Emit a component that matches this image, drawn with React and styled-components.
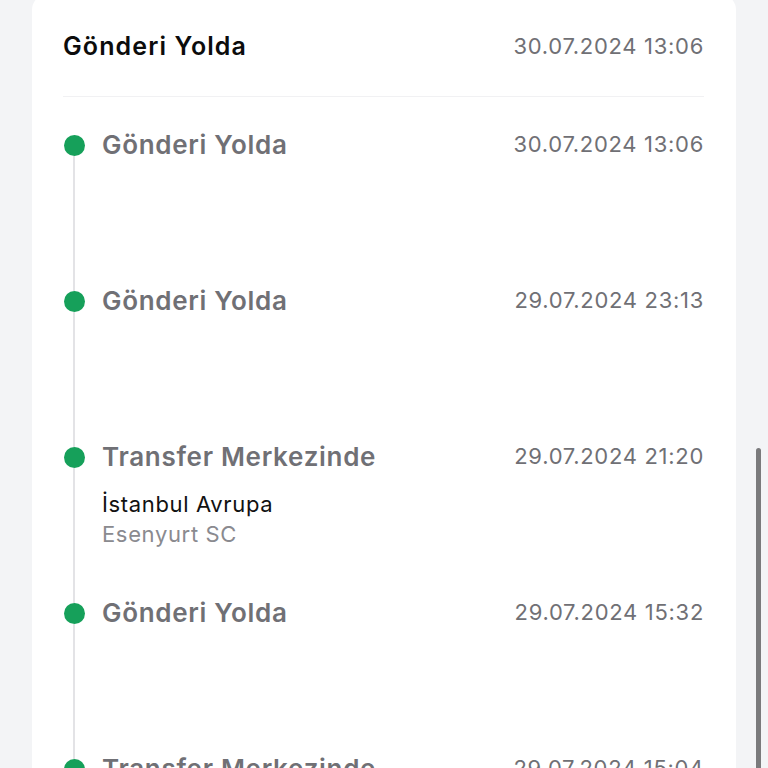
import React from 'react';
import styled, { createGlobalStyle } from 'styled-components';

const GlobalStyle = createGlobalStyle`
  html, body {
    margin: 0;
    padding: 0;
    background: #f3f4f6;
    font-family: Inter, "Liberation Sans", sans-serif;
    overflow: hidden;
  }
`;

const Page = styled.div`
  height: 768px;
  padding: 0 32px;
  overflow: hidden;
`;

const Card = styled.div`
  margin-top: -6px;
  background: #fff;
  border-radius: 16px 16px 0 0;
  padding: 37px 32px 0 31px;
  min-height: 900px;
`;

const Header = styled.div`
  display: flex;
  justify-content: space-between;
  align-items: center;
  height: 30px;
  padding-bottom: 35px;
  border-bottom: 1.5px solid #f1f1f3;
`;

const HeaderTitle = styled.div`
  font-size: 25px;
  font-weight: 600;
  color: #0c0c0c;
  letter-spacing: 1.1px;
`;

const DateText = styled.div`
  font-size: 22px;
  color: #707075;
  letter-spacing: 0.7px;
  line-height: 30px;
`;

const Timeline = styled.div`
  padding-top: 32px;
`;

const Item = styled.div`
  display: flex;
  height: 156px;
`;

const Rail = styled.div`
  width: 22px;
  display: flex;
  flex-direction: column;
  align-items: center;
  padding-top: 6px;
`;

const Dot = styled.div`
  width: 21px;
  height: 21px;
  border-radius: 50%;
  background: #16a05a;
  flex-shrink: 0;
`;

const Line = styled.div`
  width: 2px;
  flex: 1;
  background: #e3e3e6;
  margin-bottom: -6px;
`;

const Content = styled.div`
  flex: 1;
  padding-left: 17px;
`;

const Row = styled.div`
  display: flex;
  justify-content: space-between;
  align-items: center;
  height: 30px;
`;

const Title = styled.div`
  font-size: 26px;
  font-weight: 600;
  color: #707075;
  letter-spacing: 0.7px;
`;

const Location = styled.div`
  margin-top: 18px;
  font-size: 22px;
  line-height: 30px;
  letter-spacing: 0.65px;
  color: ${(p) => (p.muted ? '#8a8a8f' : '#111')};
`;

const Location2 = styled(Location)`
  margin-top: 0;
`;

const Scrollbar = styled.div`
  position: fixed;
  left: 756px;
  top: 448px;
  width: 5px;
  height: 340px;
  border-radius: 3px;
  background: #7a7a7c;
`;

const events = [
  { title: 'Gönderi Yolda', date: '30.07.2024 13:06' },
  { title: 'Gönderi Yolda', date: '29.07.2024 23:13' },
  { title: 'Transfer Merkezinde', date: '29.07.2024 21:20', city: 'İstanbul Avrupa', branch: 'Esenyurt SC' },
  { title: 'Gönderi Yolda', date: '29.07.2024 15:32' },
  { title: 'Transfer Merkezinde', date: '29.07.2024 15:04' },
];

export default function App() {
  return (
    <Page>
      <GlobalStyle />
      <Card>
        <Header>
          <HeaderTitle>Gönderi Yolda</HeaderTitle>
          <DateText>30.07.2024 13:06</DateText>
        </Header>
        <Timeline>
          {events.map((e, i) => (
            <Item key={i}>
              <Rail>
                <Dot />
                <Line />
              </Rail>
              <Content>
                <Row>
                  <Title>{e.title}</Title>
                  <DateText>{e.date}</DateText>
                </Row>
                {e.city && <Location>{e.city}</Location>}
                {e.branch && <Location2 muted>{e.branch}</Location2>}
              </Content>
            </Item>
          ))}
        </Timeline>
      </Card>
      <Scrollbar />
    </Page>
  );
}
